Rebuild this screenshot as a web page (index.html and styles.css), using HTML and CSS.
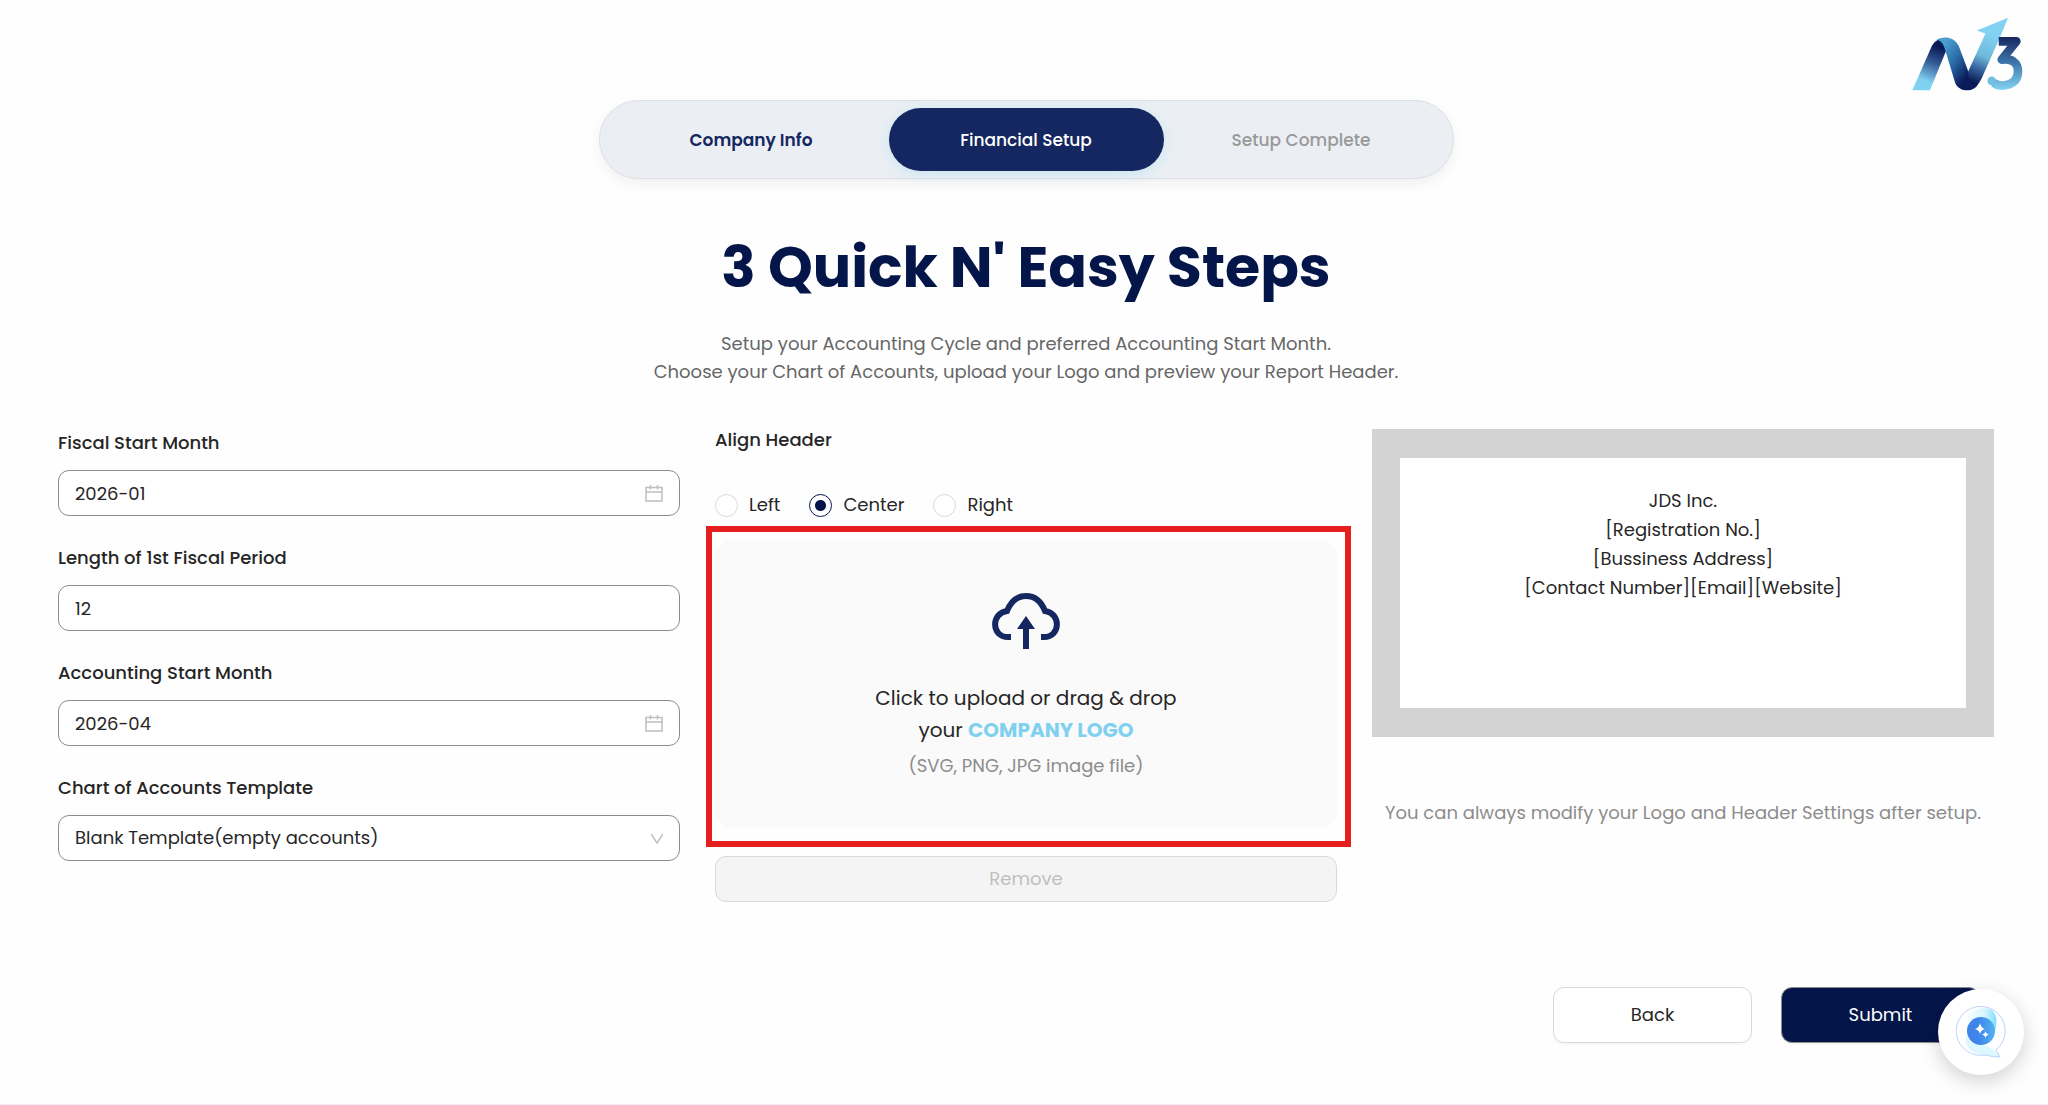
FILE: index.html
```html
<!DOCTYPE html>
<html lang="en">
<head>
	<meta charset="utf-8">
	<meta name="viewport" content="width=device-width, initial-scale=1">
	<title>Financial Setup</title>
	<link rel="stylesheet" href="styles.css">
</head>
<body>
	<header class="top">
		<svg class="logo" viewBox="64 52 334 222" role="img" aria-label="N3">
			<defs>
				<linearGradient id="leg" gradientUnits="userSpaceOnUse" x1="140" y1="125" x2="90" y2="262">
					<stop offset="0.1" stop-color="#0b1a55"/>
					<stop offset="0.45" stop-color="#355c98"/>
					<stop offset="0.85" stop-color="#80d0f0"/>
				</linearGradient>
				<linearGradient id="ribbon" gradientUnits="userSpaceOnUse" x1="150" y1="150" x2="250" y2="225">
					<stop offset="0" stop-color="#4a9fcd"/>
					<stop offset="0.45" stop-color="#2a69a6"/>
					<stop offset="0.9" stop-color="#0b1a5a"/>
				</linearGradient>
				<linearGradient id="arrow" gradientUnits="userSpaceOnUse" x1="315" y1="90" x2="248" y2="250">
					<stop offset="0.1" stop-color="#82d2f1"/>
					<stop offset="0.5" stop-color="#6fb9dc"/>
					<stop offset="0.75" stop-color="#35609b"/>
					<stop offset="1" stop-color="#0a1650"/>
				</linearGradient>
				<linearGradient id="three" gradientUnits="userSpaceOnUse" x1="0" y1="112" x2="0" y2="270">
					<stop offset="0" stop-color="#16275f"/>
					<stop offset="0.5" stop-color="#3f78ac"/>
					<stop offset="1" stop-color="#82d2f1"/>
				</linearGradient>
			</defs>
			<path fill="url(#leg)" d="M65 272L118 272L166 155L158 120L142 120Q130 126 124 138Z"/>
			<path fill="url(#ribbon)" d="M138 121C150 110 191 106 205 140L234 217L262 254C251 279 206 279 194 250L163 148C158 131 150 122 138 121Z"/>
			<path fill="url(#arrow)" d="M232 218L285 101L259 92L353 54L328 115L272 240Q266 252 258 259C245 256 234 240 232 218Z"/>
			<path fill="none" stroke="url(#three)" stroke-width="26" stroke-linejoin="round" d="M325 125H378L334 180C366 176 383 190 383 215C383 258 333 266 310 250"/>
			<circle cx="304" cy="244" r="13" fill="#72bfe2"/>
		</svg>
	</header>

	<main class="page">
		<!-- Step tabs -->
		<nav class="steps">
			<button class="step done">Company Info</button>
			<button class="step active" aria-current="step">Financial Setup</button>
			<button class="step" disabled>Setup Complete</button>
		</nav>

		<h1>3 Quick N' Easy Steps</h1>
		<p class="intro">
			Setup your Accounting Cycle and preferred Accounting Start Month.<br>
			Choose your Chart of Accounts, upload your Logo and preview your Report Header.
		</p>

		<form class="columns">
			<!-- Fiscal settings -->
			<div class="fields">
				<div class="form-group">
					<label for="fiscal-start">Fiscal Start Month</label>
					<div class="control">
						<input type="text" id="fiscal-start" value="2026-01">
						<svg class="icon" viewBox="0 0 18 18"><path d="M1 3.500H17V17H1ZM1 8H17M5.500 1V5.500M12.500 1V5.500"/></svg>
					</div>
				</div>
				<div class="form-group">
					<label for="period-length">Length of 1st Fiscal Period</label>
					<div class="control">
						<input type="text" id="period-length" value="12">
					</div>
				</div>
				<div class="form-group">
					<label for="accounting-start">Accounting Start Month</label>
					<div class="control">
						<input type="text" id="accounting-start" value="2026-04">
						<svg class="icon" viewBox="0 0 18 18"><path d="M1 3.500H17V17H1ZM1 8H17M5.500 1V5.500M12.500 1V5.500"/></svg>
					</div>
				</div>
				<div class="form-group">
					<label for="template">Chart of Accounts Template</label>
					<div class="control">
						<select id="template">
							<option>Blank Template(empty accounts)</option>
						</select>
						<svg class="icon chevron" viewBox="0 0 12 12"><path d="M0 2L6 11L12 2"/></svg>
					</div>
				</div>
			</div>

			<!-- Header alignment and logo upload -->
			<div class="upload">
				<fieldset class="align">
					<legend>Align Header</legend>
					<div class="radios">
						<label><input type="radio" name="align" value="left">Left</label>
						<label><input type="radio" name="align" value="center" checked>Center</label>
						<label><input type="radio" name="align" value="right">Right</label>
					</div>
				</fieldset>
				<div class="highlight">
					<label class="dropzone" for="logo-file">
						<svg class="cloud" viewBox="0 0 68 56">
							<path fill="none" stroke="#152760" stroke-width="6" d="M19 44H16C-1 44 -1 20 15 18Q21 3 34 3Q47 3 53 18C69 20 69 44 52 44H49"/>
							<path fill="#152760" d="M34 23L43 36H37V56H31V36H25Z"/>
						</svg>
						<span>Click to upload or drag &amp; drop<br>your <strong>COMPANY LOGO</strong></span>
						<small>(SVG, PNG, JPG image file)</small>
					</label>
					<input type="file" id="logo-file" class="file" accept=".svg,.png,.jpg">
				</div>
				<button type="button" class="remove" disabled>Remove</button>
			</div>

			<!-- Report header preview -->
			<div class="preview">
				<div class="frame">
					<div class="paper">
						JDS Inc.<br>
						[Registration No.]<br>
						[Bussiness Address]<br>
						[Contact Number][Email][Website]
					</div>
				</div>
				<p>You can always modify your Logo and Header Settings after setup.</p>
			</div>
		</form>

		<div class="actions">
			<button class="button">Back</button>
			<button class="button primary">Submit</button>
		</div>
	</main>

	<button class="chat" aria-label="Open assistant">
		<svg viewBox="0 0 50 52">
			<defs>
				<linearGradient id="ball" x1="0" y1="0.5" x2="1" y2="0.5">
					<stop offset="0.4" stop-color="#3f84e8"/>
					<stop offset="1" stop-color="#54b4f2"/>
				</linearGradient>
				<linearGradient id="swoosh" x1="0" y1="0" x2="1" y2="0">
					<stop offset="0.1" stop-color="#f1fcff"/>
					<stop offset="0.6" stop-color="#d3f5fe"/>
					<stop offset="1" stop-color="#7edcfa"/>
				</linearGradient>
			</defs>
			<path fill="url(#swoosh)" d="M12 9Q24 -2 36 4Q44 12 38 28L24 12L12 16Z"/>
			<path fill="#dcf7fe" d="M10 28Q12 38 26 39Q36 40 44 51Q34 50 29 49Q12 48 10 36Z"/>
			<path fill="none" stroke="#a9c8f8" stroke-width="0.8" d="M29 49A24.500 24.500 0 1 1 40 44L44 51Q36 51 29 49Z"/>
			<circle cx="25" cy="25" r="14" fill="url(#ball)"/>
			<path fill="#fff" d="M24 17Q25 22 29 23Q25 24 24 28Q23 24 19 23Q23 22 24 17ZM29.500 25Q30 28 33 28.500Q30 29 29.500 32Q29 29 26 28.500Q29 28 29.500 25Z"/>
		</svg>
	</button>
</body>
</html>
```

FILE: styles.css
```css
* {
	box-sizing: border-box;
}

body {
	margin: 0;
	min-height: 100vh;
	background: #fefefe;
	border-bottom: 1px solid #f6e9f6;
	color: #262626;
	font-family: Poppins, Inter, sans-serif;
	font-size: 18px;
	line-height: 28px;
}

button, input, select {
	font: inherit;
	color: inherit;
}

button {
	cursor: pointer;
}

.top {
	display: flex;
	justify-content: flex-end;
	padding: 17px 25px 9px;
}

.logo {
	width: 111px;
	height: 74px;
}

.page {
	padding: 0 54px 61px 58px;
}

/* Steps */
.steps {
	display: flex;
	width: fit-content;
	margin: 0 auto;
	padding: 7px 14px;
	background: #ebeff4;
	border: 1px solid #dedfe1;
	border-radius: 40px;
	box-shadow: 0 5px 14px rgba(0, 0, 0, 0.06);
}

.step {
	width: 275px;
	height: 63px;
	background: none;
	border: none;
	border-radius: 32px;
	color: #999;
	font-size: 17px;
	font-weight: 500;
}

.step.done {
	color: #152760;
	font-weight: 600;
}

.step.active {
	background: #152760;
	box-shadow: 0 3px 14px rgba(128, 208, 240, 0.3);
	color: white;
}

h1 {
	margin: 53px 0 28px;
	color: #041549;
	font-size: 57px;
	line-height: 70px;
	text-align: center;
}

.intro {
	margin: 0 0 43px;
	color: #666;
	text-align: center;
}

.columns {
	display: grid;
	grid-template-columns: repeat(3, 1fr);
	gap: 35px;
}

/* Fiscal settings */
.fields {
	display: flex;
	flex-direction: column;
	gap: 28px;
}

.form-group label {
	display: block;
	margin-bottom: 13px;
	font-weight: 500;
}

.control {
	display: flex;
	align-items: center;
	height: 46px;
	background: white;
	border: 1px solid #8c8c8c;
	border-radius: 11px;
}

.control input, .control select {
	flex: 1;
	min-width: 0;
	height: 44px;
	padding: 0 16px;
	background: none;
	border: none;
	appearance: none;
}

.icon {
	width: 18px;
	height: 18px;
	margin-right: 16px;
	fill: none;
	stroke: #bfbfbf;
	stroke-width: 1.500;
}

.chevron {
	width: 12px;
	height: 12px;
}

/* Upload */
.align {
	margin: 0 0 21px;
	padding: 0;
	border: none;
}

legend {
	padding: 0;
	margin-bottom: 40px;
	font-weight: 500;
	line-height: 22px;
}

.radios {
	display: flex;
	gap: 29px;
}

.radios label {
	display: flex;
	align-items: center;
	gap: 11px;
}

.radios input {
	width: 23px;
	height: 23px;
	margin: 0;
	background: white;
	border: 1px solid #d9d9d9;
	border-radius: 50%;
	appearance: none;
}

.radios input:checked {
	background: radial-gradient(circle, #041549 5px, white 6px);
	border-color: #041549;
}

.highlight {
	position: relative;
}

.highlight::after {
	content: "";
	position: absolute;
	inset: -14px -14px -19px -9px;
	border: 6px solid #e61e1e;
	pointer-events: none;
}

.dropzone {
	display: flex;
	flex-direction: column;
	align-items: center;
	padding: 53px 20px 46px;
	background: #fafafa;
	border-radius: 17px;
	font-size: 20px;
	line-height: 32px;
	text-align: center;
	cursor: pointer;
}

.cloud {
	width: 68px;
	height: 56px;
	margin-bottom: 33px;
}

.dropzone strong {
	color: #80d0f0;
}

.dropzone small {
	margin-top: 4px;
	color: #8c8c8c;
	font-size: 18px;
}

.file {
	position: absolute;
	opacity: 0;
	pointer-events: none;
}

.remove {
	width: 100%;
	height: 46px;
	margin-top: 28px;
	background: #f4f4f4;
	border: 1px solid #d9d9d9;
	border-radius: 11px;
	color: #bfbfbf;
}

/* Preview */
.frame {
	padding: 29px 28px;
	background: #d3d3d3;
}

.paper {
	min-height: 250px;
	padding: 28px;
	background: white;
	line-height: 29px;
	text-align: center;
}

.preview p {
	margin: 62px 0 0;
	color: #8c8c8c;
	text-align: center;
}

/* Bottom buttons */
.actions {
	display: flex;
	justify-content: flex-end;
	gap: 29px;
	margin-top: 85px;
	padding-right: 14px;
}

.button {
	width: 199px;
	height: 56px;
	background: white;
	border: 1px solid #d9d9d9;
	border-radius: 11px;
	box-shadow: 0 2px 2px rgba(0, 0, 0, 0.03);
}

.primary {
	background: #041549;
	border-color: #8c8c8c;
	color: white;
}

.chat {
	position: fixed;
	right: 24px;
	bottom: 30px;
	display: flex;
	align-items: center;
	justify-content: center;
	width: 86px;
	height: 86px;
	padding: 0;
	background: white;
	border: none;
	border-radius: 50%;
	box-shadow: 0 6px 20px rgba(0, 0, 0, 0.18);
}

.chat svg {
	width: 50px;
	height: 52px;
}
```
